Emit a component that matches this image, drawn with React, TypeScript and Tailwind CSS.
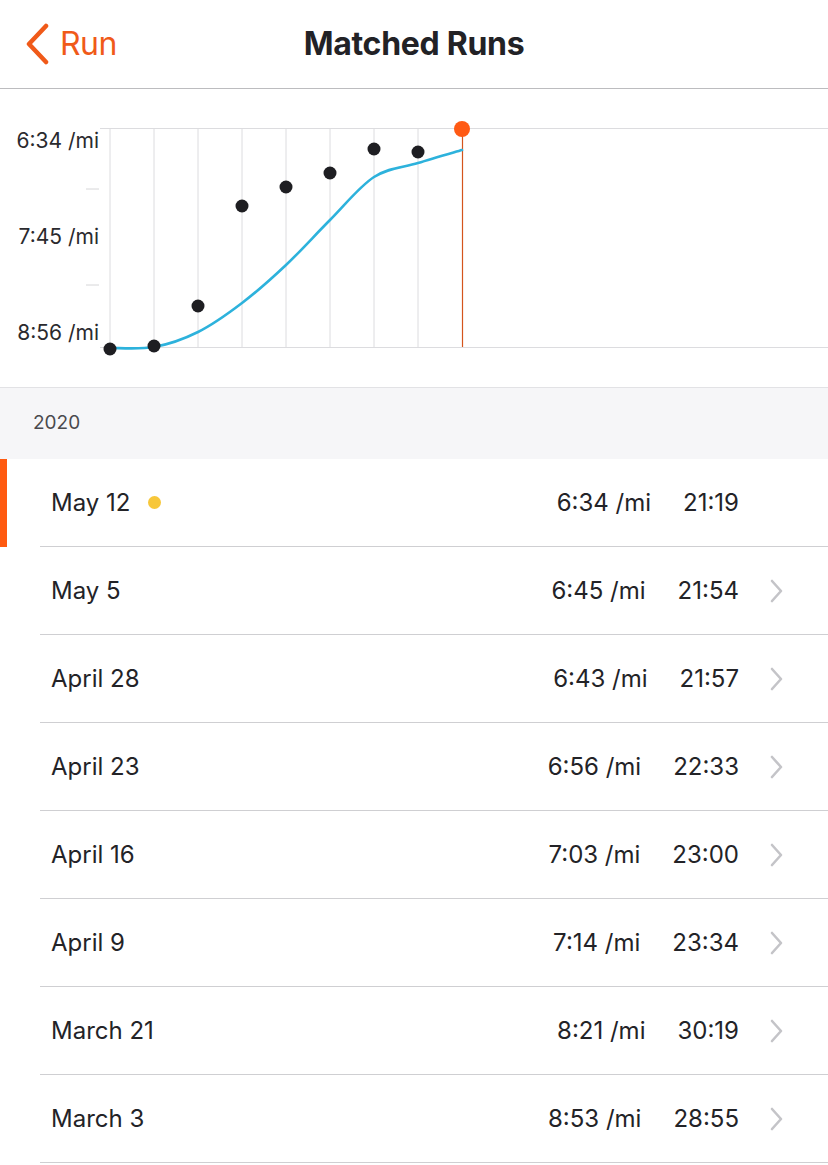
import React from "react";

const runs = [
    { date: "May 12", pace: "6:34 /mi", time: "21:19", current: true },
    { date: "May 5", pace: "6:45 /mi", time: "21:54" },
    { date: "April 28", pace: "6:43 /mi", time: "21:57" },
    { date: "April 23", pace: "6:56 /mi", time: "22:33" },
    { date: "April 16", pace: "7:03 /mi", time: "23:00" },
    { date: "April 9", pace: "7:14 /mi", time: "23:34" },
    { date: "March 21", pace: "8:21 /mi", time: "30:19" },
    { date: "March 3", pace: "8:53 /mi", time: "28:55" },
];

// chart coords are relative to the chart box (top at page y=89)
const dots = [
    [110, 260], [154, 257], [198, 217], [242, 117], [286, 98], [330, 84], [374, 60], [418, 63],
];
const curve = [
    [110, 259], [154, 258], [198, 243], [242, 214], [286, 176], [330, 131], [374, 88], [418, 74], [462, 61],
];

// catmull-rom -> cubic bezier
const smoothPath = (pts: number[][]) => {
    let d = `M${pts[0][0]},${pts[0][1]}`;
    for (let i = 0; i < pts.length - 1; i++) {
        const p0 = pts[i - 1] || pts[i];
        const p1 = pts[i];
        const p2 = pts[i + 1];
        const p3 = pts[i + 2] || p2;
        const c1x = p1[0] + (p2[0] - p0[0]) / 6;
        const c1y = p1[1] + (p2[1] - p0[1]) / 6;
        const c2x = p2[0] - (p3[0] - p1[0]) / 6;
        const c2y = p2[1] - (p3[1] - p1[1]) / 6;
        d += ` C${c1x},${c1y} ${c2x},${c2y} ${p2[0]},${p2[1]}`;
    }
    return d;
};

const PaceChart = () => {
    const cols = [110, 154, 198, 242, 286, 330, 374, 418];
    return (
        <svg width="828" height="299" viewBox="0 0 828 299" className="block">
            {cols.map((x) => (
                <line key={x} x1={x} y1={39} x2={x} y2={258} stroke="#dcdcdf" strokeWidth="1" />
            ))}
            <line x1={100} y1={39.5} x2={828} y2={39.5} stroke="#dcdcdf" strokeWidth="1" />
            <line x1={100} y1={258.5} x2={828} y2={258.5} stroke="#dcdcdf" strokeWidth="1" />
            <line x1={86} y1={100} x2={99} y2={100} stroke="#d6d6d8" strokeWidth="1" />
            <line x1={86} y1={196} x2={99} y2={196} stroke="#d6d6d8" strokeWidth="1" />
            <g fontFamily="Inter, 'Open Sans', sans-serif" fontSize="21" fill="#2a2a2e" textAnchor="end">
                <text x={99} y={59}>6:34 /mi</text>
                <text x={99} y={155}>7:45 /mi</text>
                <text x={99} y={251}>8:56 /mi</text>
            </g>
            <line x1={462.5} y1={40} x2={462.5} y2={258} stroke="#d4541c" strokeWidth="1.2" />
            <path d={smoothPath(curve)} fill="none" stroke="#2db2dc" strokeWidth="2.6" strokeLinecap="round" />
            {dots.map(([x, y]) => (
                <circle key={x} cx={x} cy={y} r={6.5} fill="#1e1e22" />
            ))}
            <circle cx={462} cy={40} r={8} fill="#ff5a14" />
        </svg>
    );
};

const Chevron = () => (
    <svg width="13" height="24" viewBox="0 0 13 24" className="shrink-0 block">
        <path d="M2 2 L11 12 L2 22" fill="none" stroke="#c4c4c8" strokeWidth="2.6" strokeLinecap="round" strokeLinejoin="round" />
    </svg>
);

export default function App() {
    return (
        <div className="w-[828px] h-[1165px] bg-white overflow-hidden text-[#232327]" style={{ fontFamily: "Inter, 'Open Sans', sans-serif" }}>
            {/* nav bar */}
            <div className="relative h-[89px] flex items-center justify-center border-b border-[#bcbcbf]">
                <div className="absolute left-[24px] top-0 h-[88px] flex items-center gap-[8px]">
                    <svg width="28" height="42" viewBox="0 0 28 42">
                        <path d="M22 3 L5 21 L22 39" fill="none" stroke="#f05a19" strokeWidth="4.5" strokeLinecap="round" strokeLinejoin="round" />
                    </svg>
                    <span className="text-[32px] text-[#f05a19] tracking-[-0.5px]">Run</span>
                </div>
                <h1 className="text-[32px] font-bold tracking-[-0.3px] text-[#222226]">Matched Runs</h1>
            </div>

            {/* chart */}
            <div className="h-[299px] border-b border-[#e2e2e5]">
                <PaceChart />
            </div>

            {/* section header */}
            <div className="h-[71px] bg-[#f6f6f8] flex items-center pl-[33px] text-[19px] text-[#4a4a4e]">2020</div>

            {/* runs */}
            <div>
                {runs.map((r) => (
                    <div key={r.date} className="relative h-[88px] flex">
                        {r.current && <div className="absolute left-0 top-0 w-[7px] h-[88px] bg-[#ff5a10]" />}
                        <div className="ml-[40px] flex-1 flex items-center border-b border-[#cfcfd2] pl-[11px] pr-[45px]">
                            <span className="text-[24px]">{r.date}</span>
                            {r.current && <span className="ml-[18px] w-[13px] h-[13px] rounded-full bg-[#f7c73a]" />}
                            <span className="ml-auto text-[24px]">{r.pace}</span>
                            <span className="ml-[32px] text-[24px]">{r.time}</span>
                            <span className={`ml-[31px] ${r.current ? "invisible" : ""}`}>
                                <Chevron />
                            </span>
                        </div>
                    </div>
                ))}
            </div>
        </div>
    );
}
